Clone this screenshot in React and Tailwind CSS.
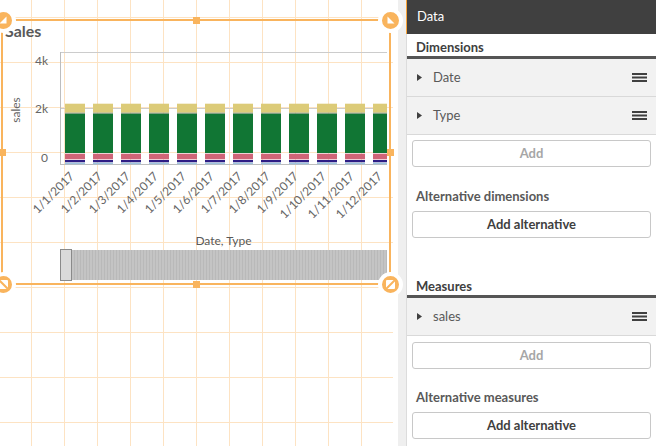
import React from "react";

const bars = Array.from({ length: 12 }, (_, i) => ({
  x: 65 + 28 * i,
  label: `1/${i + 1}/2017`,
}));

function Corner({ pos, icon }) {
  return (
    <div
      className={`absolute flex h-[25px] w-[25px] items-center justify-center rounded-full border-4 border-white bg-[#f9b45d] ${pos}`}
    >
      <svg width="17" height="17" viewBox="-8.5 -8.5 17 17">
        {icon === "tl" && <polygon points="3,-4 3,3 -4,3" fill="#fff" />}
        {icon === "tr" && <polygon points="-3,-4 -3,3 4,3" fill="#fff" />}
        {icon === "bl" && (
          <>
            <rect x="-4.5" y="-4.5" width="9" height="9" rx="1" fill="#fff" />
            <line x1="-4.5" y1="-4.5" x2="4.5" y2="4.5" stroke="#f9b45d" strokeWidth="2" />
          </>
        )}
        {icon === "br" && (
          <>
            <rect x="-4.5" y="-4.5" width="9" height="9" rx="1" fill="#fff" />
            <line x1="-4.5" y1="4.5" x2="4.5" y2="-4.5" stroke="#f9b45d" strokeWidth="2" />
          </>
        )}
      </svg>
    </div>
  );
}

function Chart() {
  return (
    <svg width="393" height="193" className="block overflow-visible">
      <defs>
        <clipPath id="plot">
          <rect x="60" y="0" width="327" height="130" />
        </clipPath>
      </defs>
      <line x1="60" y1="12.5" x2="387" y2="12.5" stroke="#cccccc" />
      <line x1="60" y1="68.5" x2="387" y2="68.5" stroke="#cccccc" />
      <line x1="60" y1="124.5" x2="387" y2="124.5" stroke="#bdbdbd" />
      <line x1="60.5" y1="12" x2="60.5" y2="125" stroke="#bdbdbd" />
      <g fontSize="12" fill="#666666" textAnchor="end">
        <text x="48" y="25">4k</text>
        <text x="48" y="73">2k</text>
        <text x="48" y="122">0</text>
      </g>
      <text
        transform="translate(19.5,70) rotate(-90)"
        textAnchor="middle"
        fontSize="12"
        fill="#666666"
      >
        sales
      </text>
      <g clipPath="url(#plot)">
        {bars.map((b) => (
          <g key={b.label}>
            <rect x={b.x} y="63.7" width="20" height="9" fill="#dccb78" />
            <rect x={b.x} y="72.7" width="20" height="1" fill="#8f9580" />
            <rect x={b.x} y="73.7" width="20" height="39.3" fill="#117634" />
            <rect x={b.x} y="113.7" width="20" height="5.6" fill="#cf6577" />
            <rect x={b.x} y="120" width="20" height="2.3" fill="#2e1d85" />
            <rect x={b.x} y="122.7" width="20" height="1.5" fill="#9dc4de" />
          </g>
        ))}
      </g>
      <g fontSize="12" fill="#666666" textAnchor="end">
        {bars.map((b) => (
          <text key={b.label} transform={`translate(${b.x + 10},137) rotate(-45)`}>
            {b.label}
          </text>
        ))}
      </g>
    </svg>
  );
}

function Row({ label }) {
  return (
    <div className="flex h-[38px] items-center border-b border-[#d9d9d9] bg-[#f2f2f2] pl-[10px] pr-[9px]">
      <svg width="5" height="7" viewBox="0 0 5 7" className="shrink-0">
        <path d="M0 0L5 3.5L0 7Z" fill="#404040" />
      </svg>
      <span className="ml-[11px] flex-1 text-[13px] text-[#595959]">{label}</span>
      <svg width="15" height="9" viewBox="0 0 15 9" className="shrink-0">
        <rect y="0" width="15" height="2" fill="#404040" />
        <rect y="3.5" width="15" height="2" fill="#404040" />
        <rect y="7" width="15" height="2" fill="#404040" />
      </svg>
    </div>
  );
}

function Heading({ children, className = "" }) {
  return (
    <div className={`border-b-[3px] border-[#555555] pb-px pl-[9px] pt-[5px] text-[13px] font-bold leading-[16px] text-[#404040] ${className}`}>
      {children}
    </div>
  );
}

function Button({ children, muted, className = "" }) {
  return (
    <div
      className={`mx-[5px] flex h-[27px] items-center justify-center rounded-[3px] border border-[#c8c8c8] bg-white text-[13px] font-bold ${
        muted ? "text-[#a6a6a6]" : "text-[#404040]"
      } ${className}`}
    >
      {children}
    </div>
  );
}

export default function App() {
  return (
    <div className="flex h-[446px] w-[656px] overflow-hidden bg-white font-['Lato','Liberation_Sans',sans-serif]">
      <div className="w-[398px] shrink-0 bg-white">
        <div className="relative h-full w-[393px] [background-image:linear-gradient(to_right,#fde3c3_1px,transparent_1px),linear-gradient(to_bottom,#fde3c3_1px,transparent_1px)] [background-position:31px_17px] [background-size:33px_45px]">
          <div className="pt-[22px]">
            <div className="h-[18px] pl-[5px] text-[16px] font-bold leading-[18px] text-[#595959]">Sales</div>
            <Chart />
            <div className="ml-[60px] h-[16px] w-[327px] text-center text-[12px] leading-[16px] text-[#595959]">
              Date, Type
            </div>
            <div className="ml-[60px] mt-px flex h-[30px] w-[327px] bg-[repeating-linear-gradient(90deg,#c4c4c4_0px,#c4c4c4_2px,#b9b9b9_2px,#b9b9b9_3px)]">
              <div className="-my-px w-[12px] border border-[#8a8a8a] bg-[#dadada]" />
            </div>
          </div>

          <div className="absolute left-[1px] top-[19px] h-[266px] w-[390px] border-2 border-[#f9b45d]" />
          <div className="absolute left-[192.5px] top-[16.5px] h-[7px] w-[7px] bg-[#f9b45d]" />
          <div className="absolute left-[192.5px] top-[280.5px] h-[7px] w-[7px] bg-[#f9b45d]" />
          <div className="absolute left-[-1.5px] top-[148.5px] h-[7px] w-[7px] bg-[#f9b45d]" />
          <div className="absolute left-[386.5px] top-[148.5px] h-[7px] w-[7px] bg-[#f9b45d]" />
          <Corner pos="left-[-9.5px] top-[7.5px]" icon="tl" />
          <Corner pos="left-[377.5px] top-[7.5px]" icon="tr" />
          <Corner pos="left-[-9.5px] top-[271.5px]" icon="bl" />
          <Corner pos="left-[377.5px] top-[271.5px]" icon="br" />
        </div>
      </div>

      <div className="w-[8px] shrink-0 bg-[#efefef]" />

      <div className="flex w-[250px] shrink-0 flex-col">
        <div className="flex h-[34px] items-center border-l border-[#faa53a] bg-[#404040] pl-[10px] text-[13px] text-white">
          Data
        </div>
        <div className="flex-1 border-l border-[#dcdcdc]">
          <Heading>Dimensions</Heading>
          <Row label="Date" />
          <Row label="Type" />
          <Button muted className="mt-[5px]">Add</Button>
          <div className="mt-[21px] pl-[9px] text-[13px] font-bold leading-[16px] text-[#595959]">
            Alternative dimensions
          </div>
          <Button className="mt-[7px]">Add alternative</Button>

          <Heading className="mt-[35px]">Measures</Heading>
          <Row label="sales" />
          <Button muted className="mt-[6px]">Add</Button>
          <div className="mt-[20px] pl-[9px] text-[13px] font-bold leading-[16px] text-[#595959]">
            Alternative measures
          </div>
          <Button className="mt-[7px]">Add alternative</Button>
        </div>
      </div>
    </div>
  );
}
